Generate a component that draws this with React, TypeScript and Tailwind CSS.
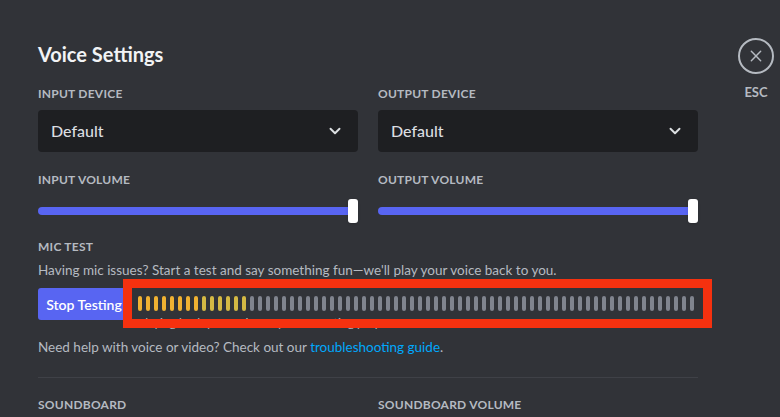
import React from "react";

const FONT = { fontFamily: 'Lato, "Noto Sans", Arial, sans-serif' };

function Chevron() {
  return (
    <svg width="18" height="18" viewBox="0 0 24 24" fill="none" stroke="#dbdee1" strokeWidth="2.6" strokeLinecap="round" strokeLinejoin="round">
      <path d="M6 9l6 6 6-6" />
    </svg>
  );
}

function Select() {
  return (
    <div className="flex h-[42px] w-[320px] items-center justify-between rounded-[4px] bg-[#1e1f22] pl-[13px] pr-[14px]">
      <span className="text-[16px] font-medium text-[#dbdee1]">Default</span>
      <Chevron />
    </div>
  );
}

function Label({ children }: { children: React.ReactNode }) {
  return (
    <div className="text-[12px] font-bold uppercase leading-[16px] tracking-[0.02em] text-[#b5bac1]">{children}</div>
  );
}

function Slider() {
  return (
    <div className="relative flex h-[24px] w-[320px] items-center">
      <div className="h-[8px] w-[314px] rounded-full bg-[#5865f2]" />
      <div className="absolute left-[310px] top-0 h-[24px] w-[10px] rounded-[3px] bg-white shadow" />
    </div>
  );
}

export default function App() {
  const bars = Array.from({ length: 70 }, (_, i) => i);
  return (
    <div className="relative flex h-[417px] w-[780px] overflow-hidden bg-[#313338]" style={FONT}>
      <div className="ml-[38px] flex w-[660px] flex-col pt-[42px]">
        <div className="text-[20px] font-bold leading-[24px] text-[#f2f3f5]">Voice Settings</div>
        <div className="mt-[20px] flex gap-[20px]">
          <div className="flex flex-col gap-[8px]">
            <Label>Input Device</Label>
            <Select />
          </div>
          <div className="flex flex-col gap-[8px]">
            <Label>Output Device</Label>
            <Select />
          </div>
        </div>
        <div className="mt-[20px] flex gap-[20px]">
          <div className="flex flex-col gap-[11px]">
            <Label>Input Volume</Label>
            <Slider />
          </div>
          <div className="flex flex-col gap-[11px]">
            <Label>Output Volume</Label>
            <Slider />
          </div>
        </div>
        <div className="mt-[16px]">
          <Label>Mic Test</Label>
        </div>
        <div className="mt-[5px] text-[13.5px] leading-[20px] text-[#b5bac1]">
          Having mic issues? Start a test and say something fun—we'll play your voice back to you.
        </div>
        <div className="mt-[8px] flex h-[32px] items-start gap-[8px]">
          <button className="h-[32px] w-[92px] shrink-0 rounded-[3px] bg-[#5865f2] text-[14px] font-semibold text-white">
            Stop Testing
          </button>
          <div className="flex flex-1 flex-col pt-[8px]">
            <div className="flex h-[15px] gap-[4px]">
              {bars.map((i) => (
                <div
                  key={i}
                  className={
                    i < 8
                      ? "h-[15px] w-[4px] rounded-full bg-[#f0b232]"
                      : i < 14
                      ? "h-[15px] w-[4px] rounded-full bg-[#d4b944]"
                      : "h-[15px] w-[4px] rounded-full bg-[#80848e]"
                  }
                />
              ))}
            </div>
            <div className="mt-[4px] text-[12px] leading-[16px] text-[#b5bac1]">
              Playing back your voice to you for testing purposes.
            </div>
          </div>
        </div>
        <div className="mt-[17px] text-[13.5px] leading-[20px] text-[#b5bac1]">
          Need help with voice or video? Check out our <span className="text-[#00a8fc]">troubleshooting guide</span>.
        </div>
        <div className="mt-[20px] h-px w-[660px] bg-[#3f4147]" />
        <div className="mt-[19px] flex gap-[20px]">
          <div className="w-[320px]">
            <Label>Soundboard</Label>
          </div>
          <div className="w-[320px]">
            <Label>Soundboard Volume</Label>
          </div>
        </div>
      </div>
      <div className="ml-[40px] flex w-[36px] flex-col items-center pt-[38px]">
        <div className="flex h-[36px] w-[36px] items-center justify-center rounded-full border-2 border-[#b5bac1]">
          <svg width="16" height="16" viewBox="0 0 24 24" fill="none" stroke="#b5bac1" strokeWidth="2.2" strokeLinecap="round">
            <path d="M5 5l14 14M19 5L5 19" />
          </svg>
        </div>
        <div className="mt-[10px] text-[13px] font-bold leading-[16px] text-[#b5bac1]">ESC</div>
      </div>
      <div className="pointer-events-none absolute left-[123px] top-[279px] h-[49px] w-[589px] border-[9px] border-[#f5310f]" />
    </div>
  );
}
